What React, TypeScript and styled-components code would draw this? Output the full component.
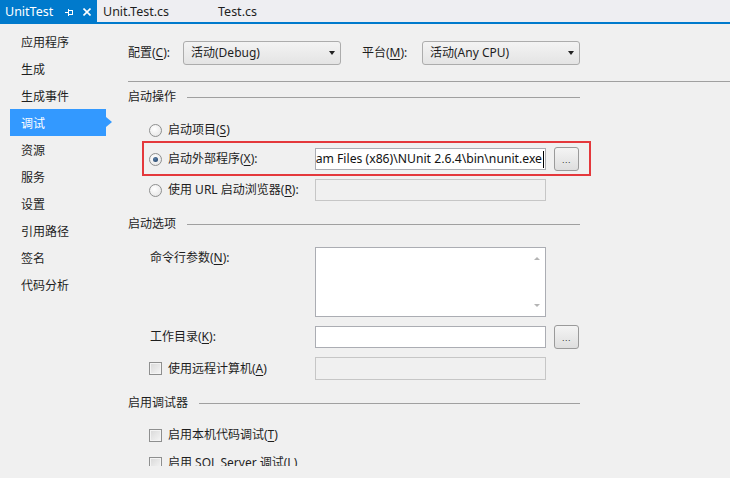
import React from "react";
import styled, { createGlobalStyle, css } from "styled-components";

const GlobalStyle = createGlobalStyle`
  html, body { margin: 0; padding: 0; background: #f0f0f0; }
  body {
    width: 730px; height: 478px; overflow: hidden;
    font-family: "Noto Sans", "Noto Sans CJK SC", sans-serif;
    font-size: 12px; color: #1e1e1e;
  }
  * { box-sizing: border-box; }
  u { text-decoration: underline; text-underline-offset: 2px; }
`;

const Page = styled.div`
  width: 730px;
  height: 478px;
  display: flex;
  flex-direction: column;
  overflow: hidden;
  background: #f0f0f0;
`;

const TabBar = styled.div`
  height: 24px;
  flex-shrink: 0;
  display: flex;
  align-items: stretch;
  background: #eeeef2;
  border-bottom: 2px solid #007acc;
`;

const Tab = styled.div<{ $active?: boolean; $width: number; $pad: number }>`
  width: ${(p) => p.$width}px;
  display: flex;
  align-items: center;
  padding: 2px 6px 0 ${(p) => p.$pad}px;
  font-family: "Noto Sans", sans-serif;
  font-size: 12.5px;
  line-height: 16px;
  color: ${(p) => (p.$active ? "#ffffff" : "#1e1e1e")};
  background: ${(p) => (p.$active ? "#007acc" : "transparent")};
`;

const TabIcons = styled.div`
  margin-left: auto;
  display: flex;
  align-items: center;
  gap: 10px;
`;

const PinIcon = () => (
  <svg width="8" height="8" viewBox="0 0 8 8" fill="none" stroke="#fff" strokeWidth="1">
    <path d="M0 4.5H3" />
    <path d="M3.5 1V8" />
    <rect x="3.5" y="2.5" width="4" height="4" />
  </svg>
);

const CloseIcon = () => (
  <svg width="8" height="8" viewBox="0 0 8 8" fill="none" stroke="#fff" strokeWidth="1.6">
    <path d="M0.5 0.5L7.5 7.5M7.5 0.5L0.5 7.5" />
  </svg>
);

const Body = styled.div`
  flex: 1;
  display: flex;
  align-items: flex-start;
  min-height: 0;
`;

const Sidebar = styled.nav`
  width: 118px;
  flex-shrink: 0;
  padding: 4px 12px 0 10px;
  display: flex;
  flex-direction: column;
  font-family: "Noto Sans CJK SC", sans-serif;
`;

const NavItem = styled.div<{ $selected?: boolean }>`
  position: relative;
  height: 27px;
  display: flex;
  align-items: center;
  padding-left: 11px;
  font-size: 12px;
  color: ${(p) => (p.$selected ? "#ffffff" : "#1e1e1e")};
  background: ${(p) => (p.$selected ? "#3399ff" : "transparent")};
  ${(p) =>
    p.$selected &&
    css`
      &::after {
        content: "";
        position: absolute;
        right: -6px;
        top: 8px;
        border-left: 6px solid #3399ff;
        border-top: 5px solid transparent;
        border-bottom: 5px solid transparent;
      }
    `}
`;

const Main = styled.main`
  flex: 1;
  height: 442px;
  overflow: hidden;
  padding: 17px 0 0 10px;
  display: flex;
  flex-direction: column;
`;

const Text = styled.span`
  font-size: 12px;
  line-height: 16px;
  white-space: nowrap;
  color: #1e1e1e;
`;

const TopRow = styled.div`
  height: 24px;
  display: grid;
  grid-template-columns: 55px 158px 21px 60px 158px;
  align-items: center;
`;

const Select = styled.div`
  height: 24px;
  display: flex;
  align-items: center;
  justify-content: space-between;
  padding: 0 5px 0 7px;
  border: 1px solid #acacac;
  border-radius: 3px;
  background: linear-gradient(#f3f3f3, #e4e4e4);
  font-size: 12px;
  line-height: 16px;
`;

const Caret = styled.span`
  width: 0;
  height: 0;
  border-left: 3.5px solid transparent;
  border-right: 3.5px solid transparent;
  border-top: 4px solid #222;
`;

const Separator = styled.div`
  margin-top: 16px;
  height: 1px;
  background: #a0a0a0;
  flex-shrink: 0;
`;

const SectionHeader = styled.div<{ $mt: number }>`
  margin-top: ${(p) => p.$mt}px;
  width: 452px;
  height: 16px;
  display: flex;
  align-items: center;
  gap: 11px;
  font-size: 12px;
  line-height: 16px;
  flex-shrink: 0;
  &::after {
    content: "";
    flex: 1;
    height: 1px;
    background: #a0a0a0;
  }
`;

const Row = styled.div<{ $mt: number; $h: number; $top?: boolean; $highlight?: boolean }>`
  position: relative;
  width: 452px;
  flex-shrink: 0;
  height: ${(p) => p.$h}px;
  margin-top: ${(p) => p.$mt}px;
  display: flex;
  align-items: ${(p) => (p.$top ? "flex-start" : "center")};
  ${(p) =>
    p.$highlight &&
    css`
      &::after {
        content: "";
        position: absolute;
        left: 14px;
        right: -11px;
        top: -7px;
        bottom: -6px;
        border: 2px solid #e4383c;
        pointer-events: none;
      }
    `}
`;

const LabelCell = styled.div<{ $indent: number; $padTop?: number }>`
  width: 187px;
  flex-shrink: 0;
  padding-left: ${(p) => p.$indent}px;
  padding-top: ${(p) => p.$padTop ?? 0}px;
  display: flex;
  align-items: center;
  gap: 6px;
`;

const Radio = styled.span<{ $checked?: boolean }>`
  width: 13px;
  height: 13px;
  border-radius: 50%;
  border: 1px solid #8e8f8f;
  background: radial-gradient(circle at 40% 35%, #ffffff, #e2e2e2);
  display: flex;
  align-items: center;
  justify-content: center;
  flex-shrink: 0;
  &::after {
    content: "";
    width: 5px;
    height: 5px;
    border-radius: 50%;
    background: ${(p) =>
      p.$checked ? "radial-gradient(circle at 40% 35%, #5a7fa8, #1b3a5e)" : "transparent"};
  }
`;

const Checkbox = styled.span`
  width: 13px;
  height: 13px;
  flex-shrink: 0;
  border: 1px solid #8e8f8f;
  background: linear-gradient(135deg, #d8d8d8, #f6f6f6);
  box-shadow: inset 0 0 0 1px #f4f4f4;
`;

const Input = styled.div<{ $disabled?: boolean; $h?: number }>`
  width: 231px;
  height: ${(p) => p.$h ?? 22}px;
  flex-shrink: 0;
  border: 1px solid ${(p) => (p.$disabled ? "#c6c6c6" : "#abadb3")};
  background: ${(p) => (p.$disabled ? "#f0f0f0" : "#ffffff")};
  display: flex;
  align-items: center;
  justify-content: flex-end;
  overflow: hidden;
  padding: 0 1px 0 1px;
`;

const InputText = styled.span`
  font-family: "Noto Sans", sans-serif;
  font-size: 12.2px;
  line-height: 16px;
  white-space: nowrap;
  color: #111;
`;

const CaretLine = styled.span`
  width: 1px;
  height: 17px;
  background: #000;
  margin-left: 1px;
  flex-shrink: 0;
`;

const BrowseButton = styled.div`
  width: 25px;
  height: 24px;
  margin-left: 8px;
  flex-shrink: 0;
  border: 1px solid #9a9a9a;
  border-radius: 3px;
  background: linear-gradient(#f4f4f4, #dedede);
  display: flex;
  align-items: flex-end;
  justify-content: center;
  padding-bottom: 5px;
  font-family: "Liberation Sans", sans-serif;
  font-size: 9px;
  line-height: 9px;
  letter-spacing: 0.5px;
  color: #333;
`;

const TextArea = styled.div`
  width: 231px;
  height: 70px;
  flex-shrink: 0;
  border: 1px solid #abadb3;
  background: #ffffff;
  display: flex;
  justify-content: flex-end;
`;

const ScrollTrack = styled.div`
  width: 17px;
  display: flex;
  flex-direction: column;
  justify-content: space-between;
  align-items: center;
  padding: 9px 0 9px;
`;

const ArrowUp = styled.span`
  width: 0;
  height: 0;
  border-left: 3px solid transparent;
  border-right: 3px solid transparent;
  border-bottom: 3px solid #b4b4b4;
`;

const ArrowDown = styled.span`
  width: 0;
  height: 0;
  border-left: 3px solid transparent;
  border-right: 3px solid transparent;
  border-top: 3px solid #b4b4b4;
`;

const NAV = ["应用程序", "生成", "生成事件", "调试", "资源", "服务", "设置", "引用路径", "签名", "代码分析"];

export default function App() {
  return (
    <>
      <GlobalStyle />
      <Page>
        <TabBar>
          <Tab $active $width={97} $pad={5}>
            <span>UnitTest</span>
            <TabIcons>
              <PinIcon />
              <CloseIcon />
            </TabIcons>
          </Tab>
          <Tab $width={115} $pad={6}>
            <span>Unit.Test.cs</span>
          </Tab>
          <Tab $width={90} $pad={6}>
            <span>Test.cs</span>
          </Tab>
        </TabBar>
        <Body>
          <Sidebar>
            {NAV.map((n) => (
              <NavItem key={n} $selected={n === "调试"}>
                {n}
              </NavItem>
            ))}
          </Sidebar>
          <Main>
            <TopRow>
              <Text>
                配置(<u>C</u>):
              </Text>
              <Select>
                <span>活动(Debug)</span>
                <Caret />
              </Select>
              <span />
              <Text>
                平台(<u>M</u>):
              </Text>
              <Select>
                <span>活动(Any CPU)</span>
                <Caret />
              </Select>
            </TopRow>
            <Separator />

            <SectionHeader $mt={7}>启动操作</SectionHeader>
            <Row $mt={14} $h={22}>
              <LabelCell $indent={21}>
                <Radio />
                <Text>
                  启动项目(<u>S</u>)
                </Text>
              </LabelCell>
            </Row>
            <Row $mt={7} $h={22} $highlight>
              <LabelCell $indent={21}>
                <Radio $checked />
                <Text>
                  启动外部程序(<u>X</u>):
                </Text>
              </LabelCell>
              <Input>
                <InputText>am Files (x86)\NUnit 2.6.4\bin\nunit.exe</InputText>
                <CaretLine />
              </Input>
              <BrowseButton>...</BrowseButton>
            </Row>
            <Row $mt={9} $h={22}>
              <LabelCell $indent={21}>
                <Radio />
                <Text>
                  使用 URL 启动浏览器(<u>R</u>):
                </Text>
              </LabelCell>
              <Input $disabled />
            </Row>

            <SectionHeader $mt={15}>启动选项</SectionHeader>
            <Row $mt={15} $h={70} $top>
              <LabelCell $indent={22} $padTop={3}>
                <Text>
                  命令行参数(<u>N</u>):
                </Text>
              </LabelCell>
              <TextArea>
                <ScrollTrack>
                  <ArrowUp />
                  <ArrowDown />
                </ScrollTrack>
              </TextArea>
            </Row>
            <Row $mt={8} $h={24}>
              <LabelCell $indent={22}>
                <Text>
                  工作目录(<u>K</u>):
                </Text>
              </LabelCell>
              <Input />
              <BrowseButton>...</BrowseButton>
            </Row>
            <Row $mt={8} $h={23}>
              <LabelCell $indent={21}>
                <Checkbox />
                <Text>
                  使用远程计算机(<u>A</u>)
                </Text>
              </LabelCell>
              <Input $disabled $h={23} />
            </Row>

            <SectionHeader $mt={15}>启用调试器</SectionHeader>
            <Row $mt={13} $h={22}>
              <LabelCell $indent={21}>
                <Checkbox />
                <Text>
                  启用本机代码调试(<u>T</u>)
                </Text>
              </LabelCell>
            </Row>
            <Row $mt={6} $h={22}>
              <LabelCell $indent={21}>
                <Checkbox />
                <Text>
                  启用 SQL Server 调试(<u>L</u>)
                </Text>
              </LabelCell>
            </Row>
          </Main>
        </Body>
      </Page>
    </>
  );
}
